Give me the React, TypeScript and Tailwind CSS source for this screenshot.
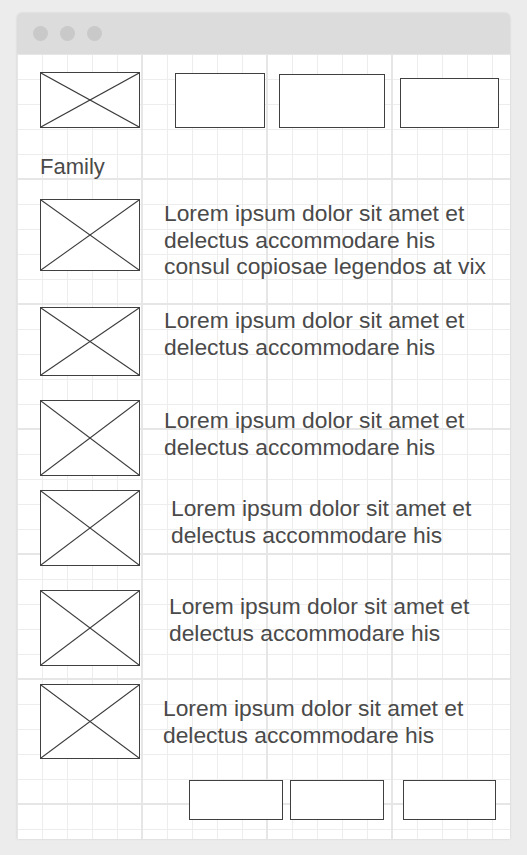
import React from "react";

const font = "font-['Liberation_Sans',Arial,sans-serif]";

function Placeholder({ className }: { className: string }) {
  return (
    <div className={`shrink-0 border border-[#404040] bg-white ${className}`}>
      <svg
        className="block h-full w-full"
        viewBox="0 0 100 100"
        preserveAspectRatio="none"
      >
        <line x1="0" y1="0" x2="100" y2="100" stroke="#3c3c3c" strokeWidth={1.1} vectorEffect="non-scaling-stroke" />
        <line x1="100" y1="0" x2="0" y2="100" stroke="#3c3c3c" strokeWidth={1.1} vectorEffect="non-scaling-stroke" />
      </svg>
    </div>
  );
}

function Box({ className }: { className: string }) {
  return <div className={`shrink-0 border border-[#404040] bg-white ${className}`} />;
}

type Row = {
  lines: string[];
  rowClass: string;
  imgClass: string;
  textClass: string;
};

const rows: Row[] = [
  {
    lines: [
      "Lorem ipsum dolor sit amet et",
      "delectus accommodare his",
      "consul copiosae legendos at vix",
    ],
    rowClass: "mt-[19px] h-[72px]",
    imgClass: "h-[72px]",
    textClass: "ml-[24px] mt-[1px]",
  },
  {
    lines: ["Lorem ipsum dolor sit amet et", "delectus accommodare his"],
    rowClass: "mt-[36px] h-[69px]",
    imgClass: "h-[69px]",
    textClass: "ml-[24px] mt-0",
  },
  {
    lines: ["Lorem ipsum dolor sit amet et", "delectus accommodare his"],
    rowClass: "mt-[24px] h-[76px]",
    imgClass: "h-[76px]",
    textClass: "ml-[24px] mt-[7px]",
  },
  {
    lines: ["Lorem ipsum dolor sit amet et", "delectus accommodare his"],
    rowClass: "mt-[14px] h-[76px]",
    imgClass: "h-[76px]",
    textClass: "ml-[31px] mt-[5px]",
  },
  {
    lines: ["Lorem ipsum dolor sit amet et", "delectus accommodare his"],
    rowClass: "mt-[24px] h-[76px]",
    imgClass: "h-[76px]",
    textClass: "ml-[29px] mt-[3px]",
  },
  {
    lines: ["Lorem ipsum dolor sit amet et", "delectus accommodare his"],
    rowClass: "mt-[18px] h-[75px]",
    imgClass: "h-[75px]",
    textClass: "ml-[23px] mt-[11px]",
  },
];

export default function App() {
  return (
    <div className={`min-h-[855px] w-full bg-[#ececec] pl-[17px] pr-[17px] pt-[13px] ${font}`}>
      <div className="w-[493px] overflow-hidden rounded-t-[5px] shadow-[0_0_2px_rgba(0,0,0,0.15)]">
        {/* title bar */}
        <div className="flex h-[41px] items-center gap-[12px] bg-[#dcdcdc] pl-[16px]">
          <span className="h-[15px] w-[15px] rounded-full bg-[#c9c9c9]" />
          <span className="h-[15px] w-[15px] rounded-full bg-[#c9c9c9]" />
          <span className="h-[15px] w-[15px] rounded-full bg-[#c9c9c9]" />
        </div>

        {/* grid canvas */}
        <div className="h-[785px] bg-white bg-[linear-gradient(to_right,#e6e6e6_2px,transparent_2px),linear-gradient(to_bottom,#e6e6e6_2px,transparent_2px),linear-gradient(to_right,#ededed_1px,transparent_1px),linear-gradient(to_bottom,#ededed_1px,transparent_1px)] [background-position:-1px_-1px,-1px_-1px,0_0,0_0] [background-size:125px_125px,125px_125px,25px_25px,25px_25px] pl-[23px] pt-[18px] text-[#4a4a4a]">
          {/* top row */}
          <div className="flex items-end">
            <Placeholder className="h-[56px] w-[100px]" />
            <Box className="ml-[35px] h-[55px] w-[90px]" />
            <Box className="ml-[14px] h-[54px] w-[106px]" />
            <Box className="ml-[15px] h-[50px] w-[99px]" />
          </div>

          <div className="mt-[26px] text-[22px] leading-[26px]">Family</div>

          {rows.map((row, i) => (
            <div key={i} className={`flex items-start ${row.rowClass}`}>
              <Placeholder className={`w-[100px] ${row.imgClass}`} />
              <div className={`whitespace-nowrap text-[22.8px] leading-[26.5px] ${row.textClass}`}>
                {row.lines.map((l) => (
                  <div key={l}>{l}</div>
                ))}
              </div>
            </div>
          ))}

          {/* bottom buttons */}
          <div className="mt-[21px] flex">
            <Box className="ml-[149px] h-[40px] w-[94px]" />
            <Box className="ml-[7px] h-[40px] w-[94px]" />
            <Box className="ml-[19px] h-[40px] w-[93px]" />
          </div>
        </div>
      </div>
    </div>
  );
}
